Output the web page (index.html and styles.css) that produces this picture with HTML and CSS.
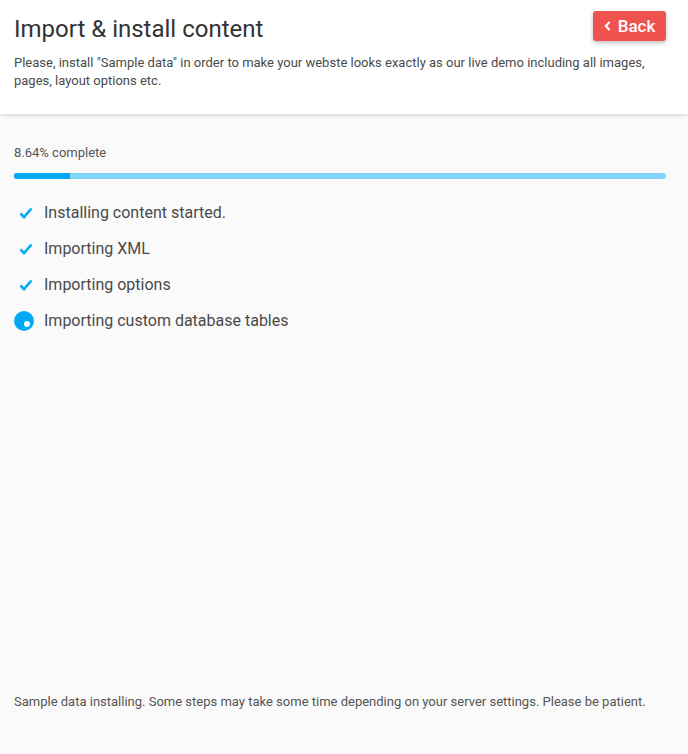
FILE: index.html
```html
<!DOCTYPE html>
<html>
<head>
<meta charset="utf-8">
<link rel="stylesheet" href="styles.css">
</head>
<body>
<div class="page">
  <header class="header">
    <div class="head-row">
      <h1 class="title">Import &amp; install content</h1>
      <button class="back"><svg class="chev" width="7" height="10" viewBox="0 0 7 10"><path d="M5.5 1 L1.8 5 L5.5 9" fill="none" stroke="#fff" stroke-width="2"/></svg>Back</button>
    </div>
    <p class="desc">Please, install "Sample data" in order to make your webste looks exactly as our live demo including all images, pages, layout options etc.</p>
  </header>
  <main class="main">
    <div class="progress-label">8.64% complete</div>
    <div class="bar"><div class="fill" style="width:8.64%"></div></div>
    <ul class="steps">
      <li class="step"><span class="icon"><svg width="14" height="12" viewBox="0 0 14 12"><path d="M1.5 6.5 L5 10 L12.5 1.5" fill="none" stroke="#03a9f4" stroke-width="2.6"/></svg></span>Installing content started.</li>
      <li class="step"><span class="icon"><svg width="14" height="12" viewBox="0 0 14 12"><path d="M1.5 6.5 L5 10 L12.5 1.5" fill="none" stroke="#03a9f4" stroke-width="2.6"/></svg></span>Importing XML</li>
      <li class="step"><span class="icon"><svg width="14" height="12" viewBox="0 0 14 12"><path d="M1.5 6.5 L5 10 L12.5 1.5" fill="none" stroke="#03a9f4" stroke-width="2.6"/></svg></span>Importing options</li>
      <li class="step"><span class="icon spin"><span class="dot"></span></span>Importing custom database tables</li>
    </ul>
    <p class="note">Sample data installing. Some steps may take some time depending on your server settings. Please be patient.</p>
  </main>
</div>
</body>
</html>
```

FILE: styles.css
```css
html, body {
  margin: 0;
  padding: 0;
  height: 100%;
}
body {
  font-family: Roboto, "Liberation Sans", sans-serif;
  background: #fafafa;
  color: #444;
}
.page {
  display: flex;
  flex-direction: column;
  min-height: 754px;
}
.header {
  background: #fff;
  height: 114px;
  box-sizing: border-box;
  padding: 11px 22px 0 14px;
  box-shadow: 0 1px 4px rgba(0,0,0,0.18);
  position: relative;
  z-index: 1;
}
.head-row {
  display: flex;
  justify-content: space-between;
  align-items: flex-start;
}
.title {
  margin: 3px 0 0;
  font-size: 24px;
  font-weight: 400;
  color: #333;
  line-height: 30px;
}
.back {
  width: 73px;
  height: 30px;
  background: #ef5350;
  color: #fff;
  border: none;
  border-radius: 3px;
  font-family: Roboto, "Liberation Sans", sans-serif;
  font-size: 17px;
  font-weight: 500;
  box-shadow: 0 2px 4px rgba(0,0,0,0.25);
  padding: 0 0 1px;
  display: flex;
  align-items: center;
  justify-content: center;
  gap: 7px;
}
.chev {
  display: block;
}
.desc {
  margin: 10px 0 0;
  font-size: 13px;
  line-height: 18px;
  color: #4a4a4a;
  max-width: 650px;
}
.main {
  flex: 1;
  display: flex;
  flex-direction: column;
  padding: 31px 22px 0 14px;
}
.progress-label {
  font-size: 13px;
  line-height: 16px;
  color: #555;
}
.bar {
  margin-top: 12px;
  height: 6px;
  border-radius: 3px;
  background: #81d4fa;
  overflow: hidden;
}
.fill {
  height: 100%;
  background: #03a9f4;
}
.steps {
  list-style: none;
  margin: 24px 0 0;
  padding: 0;
  display: flex;
  flex-direction: column;
  gap: 16px;
}
.step {
  display: flex;
  align-items: center;
  font-size: 16px;
  line-height: 20px;
  color: #4a4a4a;
}
.icon {
  width: 20px;
  height: 20px;
  margin-right: 10px;
  display: flex;
  align-items: center;
  justify-content: center;
  padding-left: 3px;
  box-sizing: border-box;
}
.spin {
  background: #03a9f4;
  border-radius: 50%;
  position: relative;
  padding: 0;
}
.dot {
  position: absolute;
  width: 6px;
  height: 6px;
  background: #fff;
  border-radius: 50%;
  left: 10px;
  top: 10px;
}
.note {
  margin: auto 0 43px;
  font-size: 13px;
  line-height: 18px;
  color: #555;
}
```
